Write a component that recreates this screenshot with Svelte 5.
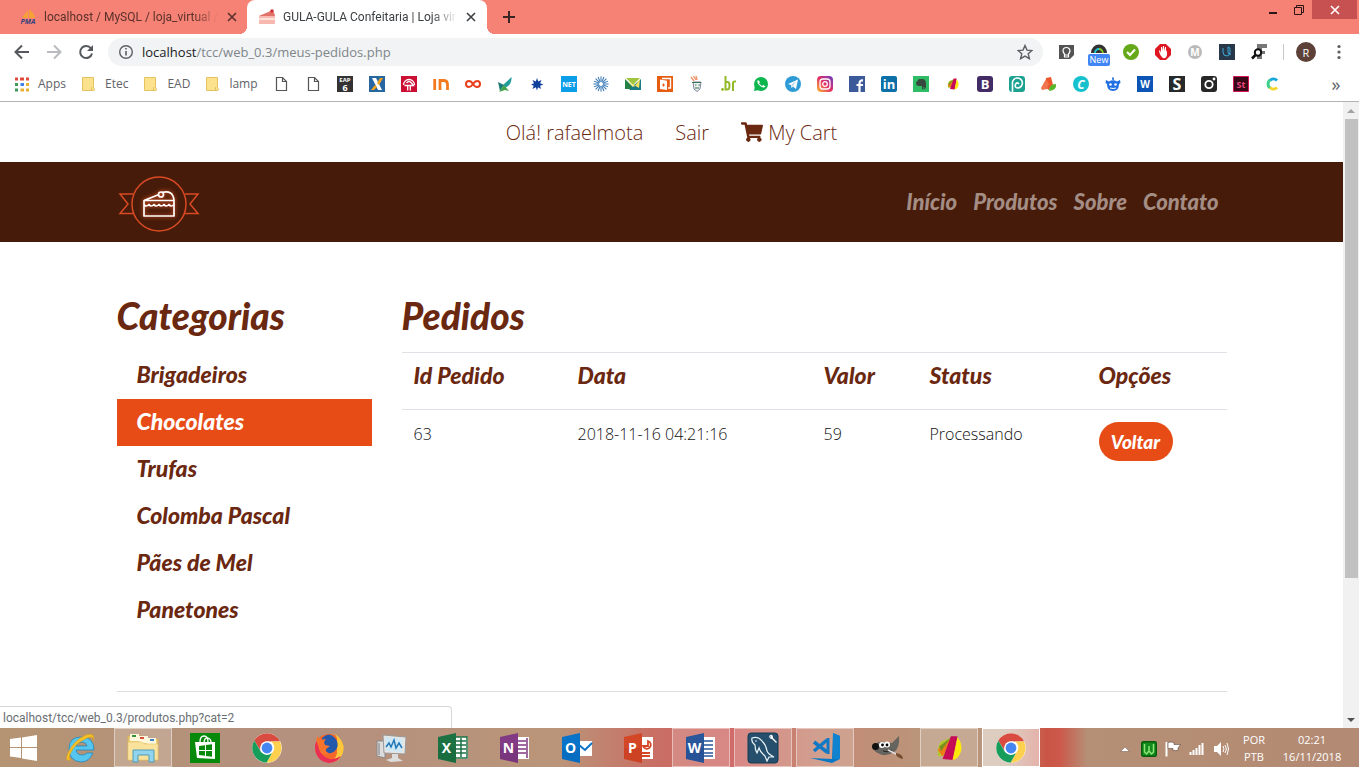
<script>
  const letter = (t, x, y, size, fill, extra = '') =>
    `<text x="${x}" y="${y}" font-size="${size}" fill="${fill}" font-family="Open Sans, sans-serif" font-weight="700" text-anchor="middle" ${extra}>${t}</text>`;
  const svg = (box, body) => `<svg viewBox="0 0 ${box} ${box}" width="100%" height="100%" overflow="visible" style="display:block" aria-hidden="true">${body}</svg>`;
  const folder = svg(16, '<path d="M1.500 1.500h11v10.500c1.500.5 1.500 2.500 0 2.500h-11z" fill="#fce28c" stroke="#e3c25f"/><path d="M10.500 11v3.500" stroke="#e3c25f"/>');
  const page = '<path d="M3.500 1.500h6l4 4v9h-10zM9.500 1.500v4h4" fill="#fff" stroke="#555" stroke-width="1.200"/>';
  const pinwheel = '<path d="M3 4L11 1 5 12.500 1.500 13Q0 9 3 4z" fill="#b3c92b"/><path d="M1 9L10 2 4 13z" fill="#ef7d1a"/><path d="M2 7L9 1.500 3 10z" fill="#7c8f1c"/><path d="M9 .8h4L10.500 15.200 4 14.500z" fill="#c60c56"/><path d="M13 1.500q3 3 2.300 8-1.500 5-5.300 5.700z" fill="#ffe90b"/>';

  const folders = [
    { name: 'Etec' },
    { name: 'EAD' },
    { name: 'lamp' }
  ];

  const rays = Array.from({ length: 16 }, (_, i) => `<path d="M8 6V.4" transform="rotate(${i * 22.5} 8 8)"/>`).join('');
  const marks = [
    ['Page', page],
    ['Page', page],
    ['EAP 6', `<path fill="#333" d="M0 0h16v16H0z"/>${letter('EAP', 8, 6, 6, '#fff')}${letter('6', 8, 14.5, 9, '#fff')}`],
    ['Exchange', '<path fill="#2666a1" d="M0 0h16v16H0z"/><path d="M3 2h4l6 12H9z" fill="#fff"/><path d="M14 2h-3L8 7l2 2zM6 9l-4 5h3l3-3z" fill="#f6a51b"/>'],
    ['Bradesco', '<path fill="#cb1034" d="M0 0h16v16H0z"/><path d="M2.500 9a5.500 5.500 0 0111 0M5.500 7q2.500-3 5 0l2 2.500H3.500M6.700 9v5.500M9.300 9v5.500" fill="none" stroke="#fff" stroke-width="1.300"/>'],
    ['Inter', '<path d="M1.700 3v11M7 14V4.500h3.500q4 0 4 4V14" fill="none" stroke="#f47a20" stroke-width="2.800"/>'],
    ['Coursera', '<path d="M8 8C6.500 5.500 5 5 4 5a3 3 0 000 6c2 0 3-1.500 4-3s2-3 4-3a3 3 0 010 6c-1 0-2.500-.5-4-3z" fill="none" stroke="#e8401c" stroke-width="2"/>'],
    ['Bird', '<path d="M14.500 1L6 9l2 3q7-3 6.500-11z" fill="#239e9c"/><path d="M1 6l6 3-4 6z" fill="#1a7d75"/><path d="M7 9l5 6-4-1-6 2z" fill="#44a44c"/>'],
    ['Star', '<path d="M8 2l1.200 3.500L12.500 4l-1.400 3.200L14.500 8.500l-3.400 1.200L12 13l-3-1.700L8 14.500l-1.200-3.200L3.500 13l1.200-3.300L2 8.500l3-1.300L3.500 4l3.300 1.500z" fill="#103f9c"/>'],
    ['NET', `<path fill="#0c9ee9" d="M0 0h16v16H0z"/>${letter('NET', 8, 10.500, 7, '#fff')}`],
    ['Burst', `<g stroke="#3376b5" stroke-width="1">${rays}</g>`],
    ['Mail', '<path d="M0 3l7 7v3H0z" fill="#258244"/><path d="M1 2h14l-7 7z" fill="#9fc53f"/><path d="M16 3v11H4l5-5z" fill="#187c88"/><path d="M4 6l5 5 6-8-1 9z" fill="#f7df58"/>'],
    ['Office', '<path fill="#e65d12" d="M0 0h16v16H0z"/><path d="M3 3.500l7 1.200V14l-7-1z" fill="#fff"/><path d="M5 2.500h8.500V12H11" fill="none" stroke="#fff" stroke-width="1.400"/><path d="M5 9h3M6.500 7.500v3" stroke="#e65d12"/>'],
    ['Pet', '<path d="M4 6l1 7 3 2.500 3-2.500 1-7z" fill="#edf3ec" stroke="#668" stroke-width=".8"/><path d="M2 1l3 4M4.500 0L7 4M7 0l1 4" stroke="#ef966b" stroke-width="1.400"/><path d="M3 6.500h9M6 9h1.500m2 0h1.500m-5 3h4" stroke="#35755c" stroke-width="1.200"/>'],
    ['br', '<path d="M4.500 0v13.500H6q2.500 0 2.500-4T6 6H4.500M12 15V7q0-2 3-1.500" fill="none" stroke="#92ba28" stroke-width="2"/><circle cx="1.500" cy="13.500" r="1.400" fill="#92ba28"/>'],
    ['WhatsApp', '<circle cx="8" cy="8" r="7" fill="#0eb74e"/><path d="M1 15l1-5 4 4z" fill="#0eb74e"/><path d="M5 4l2 2-1 1.500L9 10l1.500-1 2 1.500C10 14 2 7 5 4z" fill="#fff"/>'],
    ['Telegram', '<circle cx="8" cy="8" r="8" fill="#2f9bd6"/><path d="M3 8l10-4.500L11 13 8 10.500 6.500 12 6 9z" fill="#fff"/><path d="M6 9l5-4-3 5.500" fill="#b8d8eb"/>'],
    ['Instagram', '<defs><linearGradient id="ig" x2="1" y1="1" y2="0"><stop stop-color="#fdbf35"/><stop offset=".5" stop-color="#e52f66"/><stop offset="1" stop-color="#653cc8"/></linearGradient></defs><rect width="16" height="16" rx="4" fill="url(#ig)"/><rect x="3" y="3" width="10" height="10" rx="3" fill="none" stroke="#fff" stroke-width="1.300"/><circle cx="8" cy="8" r="2.300" fill="none" stroke="#fff" stroke-width="1.300"/>'],
    ['Facebook', '<path fill="#3c5a99" d="M0 0h16v16H0z"/><path d="M10.500 16V7.500q0-3.500 3.500-3.200M7.500 9H14" fill="none" stroke="#fff" stroke-width="2.200"/>'],
    ['LinkedIn', `<rect width="16" height="16" rx="2" fill="#0c70a8"/>${letter('in', 8, 13, 13, '#fff')}`],
    ['Evernote', '<path fill="#2ebd65" d="M0 0h16v16H0z"/><path d="M3 6.500L6 3h3.500q3.500 0 3.500 5v3q-.5 3.500-4 2v-3H6Q3 10 3 6.500z" fill="#37493e"/><path d="M10 12h1.500" stroke="#2ebd65"/>'],
    ['Pinwheel', `<g transform="translate(2 2) scale(.75)">${pinwheel}</g>`],
    ['Bootstrap', `<rect width="16" height="16" rx="3" fill="#432b66"/>${letter('B', 8, 13, 13, '#fff')}`],
    ['Photopea', '<rect width="16" height="16" rx="3" fill="#1da291"/><path d="M3.500 16V8a5 5 0 115 4q-3-.5-2-3.500T10 8" fill="none" stroke="#fff" stroke-width="1.600"/>'],
    ['Fruit', '<path d="M5 2l5-1 2 8-4 5-3-2z" fill="#ef552c"/><path d="M5 3L0 12l1 2 5-1 2-5z" fill="#f0754c"/><path d="M8 15q0-7 7-7 1 6-7 7z" fill="#56b72b"/>'],
    ['Canva', `<circle cx="8" cy="8" r="8" fill="#16c1ce"/>${letter('C', 8, 12.500, 12, '#fff', 'font-style="italic"')}`],
    ['Robot', '<path d="M2 8l-1.500-1L1 4l3 1.500Q8 3 12 5.500L15 4l.5 3L14 8q0 7-6 7T2 8zM7.300 4L7 1.500h2L8.700 4z" fill="#216fe2"/><circle cx="5.500" cy="8.500" r="1.300" fill="#fff"/><circle cx="10.500" cy="8.500" r="1.300" fill="#fff"/><path d="M5 12q3 1 6 0" stroke="#fff" fill="none"/>'],
    ['Word', `<path fill="#0c55b4" d="M0 0h16v16H0z"/>${letter('W', 8, 12, 10, '#fff')}`],
    ['S', `<path fill="#272a2b" d="M0 0h16v16H0z"/>${letter('S', 8, 14, 16, '#fff')}`],
    ['Camera', '<rect width="16" height="16" rx="3" fill="#272728"/><circle cx="8" cy="8.500" r="3.700" fill="none" stroke="#fff" stroke-width="1.800"/><circle cx="13" cy="3" r="1.400" fill="#fff"/>'],
    ['Stock', `<path fill="#390716" stroke="#d2185b" d="M.5.5h15v15H.5z"/>${letter('St', 8, 11.500, 9, '#e94881')}`],
    ['C', '<path d="M12 4.500A5 5 0 005 4.500" fill="none" stroke="#19a8da" stroke-width="3"/><path d="M5 4A5 5 0 005 12" fill="none" stroke="#3dd08d" stroke-width="3"/><path d="M5 11.500A5 5 0 0012 11.500" fill="none" stroke="#f2d52a" stroke-width="3"/>']
  ];

  const extensions = [
    ['Keep', svg(16, '<path d="M0 1h15v10l-4 4H0z" fill="#535353"/><path d="M5.500 10q-1-1-1.500-3a3.500 3.500 0 017 0q-.5 2-1.500 3v3h-4zM5.500 11h4" fill="none" stroke="#fff" stroke-width="1.200"/>')],
    ['Speed', svg(16, '<path d="M0 9a8 8.500 0 0116 0z" fill="#333"/><path d="M4 9a4 4 0 014-4" fill="none" stroke="#22c7dc" stroke-width="1.800"/><path d="M8 5q3 0 4 4" fill="none" stroke="#8dcb2a" stroke-width="1.800"/>')],
    ['Safe', svg(16, '<circle cx="8" cy="8" r="8" fill="#65a819"/><path d="M4 8l3 3 5-5.500" fill="none" stroke="#fff" stroke-width="2"/>')],
    ['Block', svg(16, '<path d="M5 0h6l5 5v6l-5 5H5l-5-5V5z" fill="#de1720"/><path d="M4 7l1-1 1 3V3h1v4l1-5h1v5l1-4h1v5l1-2v5q-1 4-4 3Q5 12 4 7z" fill="#fff"/>')],
    ['Mega', svg(16, `<circle cx="8" cy="8" r="7" fill="#bababa"/>${letter('M', 8, 11.500, 10, '#fff')}`)],
    ['Udacity', svg(16, '<path fill="#293849" d="M0 0h16v16H0z"/><path d="M4 4v4q0 4 4 4 3 0 3-4V5q0-2-2-2v5q0 3 3 2" fill="none" stroke="#3ba8d8" stroke-width="1"/>')],
    ['Fonts', svg(16, '<path d="M6 0h10v4h-5v3h3v3h-3v5H6z" fill="#777"/><circle cx="7" cy="8.500" r="3.200" fill="#fff" stroke="#111" stroke-width="2"/><path d="M4.500 11L1 14.500" stroke="#111" stroke-width="2.600"/>')]
  ];

  const office = (color, dark, ch, sheet) => svg(30, `${sheet}<path d="M0 4L18 0v30L0 26z" fill="${color}"/><path d="M0 15h18v15L0 26z" fill="${dark}" opacity=".15"/>${letter(ch, 8.500, 20, 14, '#fff')}`);
  const chrome = svg(30, '<circle cx="15" cy="15" r="14.700" fill="#fff"/><path d="M2.300 7.500A14.700 14.700 0 0127.700 7.500L28 8.500H15a7 7 0 00-6 10z" fill="#d94b40"/><path d="M28 8.500A14.700 14.700 0 0114.500 29.700L21 18.500a7 7 0 00-2-10z" fill="#fdd04e"/><path d="M2.300 7.500A14.700 14.700 0 0014.500 29.700L20 20q-6 4-11-1z" fill="#169d5a"/><circle cx="15" cy="15" r="6.800" fill="#fff"/><circle cx="15" cy="15" r="5.400" fill="#4586f3"/>');
  const lines = '<path d="M17 4h12v22H17z" fill="#fff"/>';
  const apps = [
    { name: 'Internet Explorer', art: svg(30, '<path d="M28 17H10q1 5 6 5 3 0 5-2h6q-4 9-12 9Q3 28 3 16T15 4q13 0 13 13zM10 13h11q-1-4-5-4-5 0-6 4z" fill="#57c6ee" stroke="#2588bc" stroke-width=".8"/><path d="M5 27q-7 2-3-7Q8 7 20 2q10-3 7 6 1-6-6-3Q9 10 4 21q-2 5 1 6z" fill="#f6c126" stroke="#dba21f" stroke-width=".7"/>') },
    { name: 'Explorador de Arquivos', state: 'open', art: svg(30, '<path d="M0 3h13l2 3h15v21H0z" fill="#edcf7c" stroke="#d4ad55"/><path d="M2 1h9v7H2zM11 3h9v7h-9zM19 5h9v7h-9z" fill="#fff7db"/><path d="M4 3h4" stroke="#37933b" stroke-width="2"/><path d="M22 7h4" stroke="#3b82c6" stroke-width="2"/><path d="M12 5h4" stroke="#dc4f37" stroke-width="2"/><path d="M0 9h14l2 2h14v16H0z" fill="#f9e29c" stroke="#e2c26d" stroke-width=".6"/><path d="M5 29V17h21v12h-5v-7H10v7z" fill="#90d4ed" stroke="#559bb6"/>') },
    { name: 'Loja', art: svg(30, '<path fill="#078a0b" d="M0 0h30v30H0z"/><path d="M5 9h20v17L7 25z" fill="#fff"/><path d="M10 9q0-6 4-6 4 0 4 6M14 9q1-5 4-4 3 1 3 4" fill="none" stroke="#fff" stroke-width="1.300"/><path d="M9 13l6-.8V17H9zM16 12l6-.8V17h-6zM9 18h6v4.800L9 22zM16 18h6v5.800l-6-.8z" fill="#078a0b"/>') },
    { name: 'Chrome', art: chrome },
    { name: 'Firefox', art: svg(30, '<circle cx="15" cy="15" r="14" fill="#f6682a"/><path d="M20 0q11 8 9.500 17-2 12-14.500 13 9-5 8-13 0-6-4-9 3 0 4 2Q24 4 20 0z" fill="#ffc73a"/><path d="M8 5q7-7 13 0 4 5 2 10-3 6-9 5-6-2-5-8z" fill="#2359ac"/><path d="M3 3l3 4 6-1q-3 3-1 6l5 1-4 3q-1 3 3 4-6 3-10-2Q1 11 3 3z" fill="#f9742b"/><path d="M1 13q0 15 14 17 8 0 12-7-8 5-14 2Q5 21 4 12q-1-1-1-4-2 2-2 5z" fill="#ea2f55"/>') },
    { name: 'Monitor', art: svg(30, '<path d="M1 8h8v17l-8-2z" fill="#ddd" stroke="#888"/><path d="M3 10v12" stroke="#777"/><path d="M7 2l23 2-1 17-21-1z" fill="#e7e5e1" stroke="#999"/><path d="M9 4l18 2-1 13-16-1z" fill="#cfe8f6"/><path d="M10 14l3-4 2 4 3-7 2 8 3-5 3 5" fill="none" stroke="#2477b5" stroke-width="1.500"/><path d="M16 21h6v4l5 3-12 1-5-2 6-2z" fill="#ddd"/>') },
    { name: 'Excel', art: office('#1d7244', '#045025', 'X', '<path d="M16 4h14v22H16z" fill="#fff"/><path d="M18 4h11v21H18M18 8h10M18 12h10M18 16h10M18 20h10M23 5v19" fill="none" stroke="#1d7244" stroke-width="1.500"/>') },
    { name: 'OneNote', art: office('#813a83', '#5a235c', 'N', lines + '<path d="M17 8h9M17 12h9M17 16h9M17 20h9M27 5v20" stroke="#813a83" stroke-width="1.500"/>') },
    { name: 'Outlook', art: office('#0873c8', '#024f9a', 'O', '<path d="M17 8h13v15H17z" fill="#fff"/><path d="M17 12l6 5 7-7" fill="none" stroke="#0873c8" stroke-width="2"/>') },
    { name: 'PowerPoint', art: office('#d44726', '#a72a12', 'P', lines + '<path d="M24 8a4 4 0 11-5 5h5zM18 20h8M18 23h8" fill="none" stroke="#d44726" stroke-width="1.800"/>') },
    { name: 'Word', state: 'open', art: office('#2a569a', '#183d79', 'W', lines + '<path d="M17 8h10M17 12h10M17 16h10M17 20h10M17 23h10" stroke="#2a569a" stroke-width="1.500"/>') },
    { name: 'MySQL Workbench', state: 'open', art: svg(30, '<rect width="30" height="30" rx="3" fill="#254f6d" stroke="#173a52"/><path d="M4 5q6-2 10 3 4 4 5 10 1 3 7 6l-5 0-2 4-2-5q-5-4-6-8l-2 5q-2-3-2-8Q3 9 4 5z" fill="none" stroke="#e9f2f6" stroke-width="1.200"/><circle cx="8" cy="8" r=".8" fill="#fff"/><path d="M21 2q0 4 3 4l4 4 1-1-4-4q0-4-3-3l1 3z" fill="#fff"/>') },
    { name: 'Visual Studio Code', state: 'open', art: svg(30, '<path d="M23 0l7 3v23l-8 4L0 25l22 1z" fill="#0878c6"/><path d="M23 0v26l7 0V3z" fill="#0f83d0"/><path d="M17 7L4 18M4 9l13 10" stroke="#1279c4" stroke-width="3.500" fill="none"/><path d="M18 5v16" stroke="#1279c4" stroke-width="3"/>') },
    { name: 'GIMP', art: svg(30, '<path d="M1 14q4-6 10-5l9 1 7-7q1 12-5 16-9 6-16 1Q2 19 1 14z" fill="#66645f"/><circle cx="3.500" cy="13.500" r="3.500" fill="#111"/><circle cx="10" cy="12" r="3" fill="#fff"/><circle cx="15" cy="11.500" r="3" fill="#fff"/><circle cx="10.500" cy="12" r="1.400"/><circle cx="15" cy="12" r="1.400"/><path d="M11 18q4 2 9-1" stroke="#222" fill="none"/><path d="M16 17l10 5" stroke="#ddd" stroke-width="1.500"/><path d="M24 20q7 1 7 6-5-1-7-4z" fill="#765131"/>') },
    { name: 'Pinwheel', state: 'open', art: svg(30, `<g transform="translate(2 2) scale(1.650)">${pinwheel}</g>`) },
    { name: 'Google Chrome', state: 'active', art: chrome }
  ];

  const tray = [
    ['Mostrar ícones ocultos', svg(16, '<path d="M3.500 10.500L8 6l4.500 4.500z" fill="#fff" stroke="#6d5546" stroke-width=".5"/>')],
    ['Servidor', svg(16, '<rect x=".7" y=".7" width="14.600" height="14.600" rx="1.500" fill="#138a1c" stroke="#085b0d" stroke-width="1.400"/><path d="M3.500 3v8l2 2L8 10l2.500 3 2-2V3M8 5v5" fill="none" stroke="#8de577" stroke-width="1.500"/>')],
    ['Central de Ações', svg(16, '<path d="M1.500 1v14.500" stroke="#fff" stroke-width="2"/><path d="M3 1.500q3-1 6 0v2h6.500L13 7v2.500H8v-2H3z" fill="#fff" stroke="#5f4c40" stroke-width=".6"/>')],
    ['Rede', svg(16, '<path d="M1.500 11v3M4.500 9v5M7.500 7v7M10.500 4v10M13.500 2v12" stroke="#fff" stroke-width="2"/>')],
    ['Volume', svg(16, '<path d="M1 5h3l4-4v14l-4-4H1z" fill="#fff"/><path d="M10 5q2 3 0 6M12 4q3 4 0 8M14 2q3 6 0 12" fill="none" stroke="#fff"/>')]
  ];

  const menu = ['Início', 'Produtos', 'Sobre', 'Contato'];
  const categories = ['Brigadeiros', 'Chocolates', 'Trufas', 'Colomba Pascal', 'Pães de Mel', 'Panetones'];
  const columns = ['Id Pedido', 'Data', 'Valor', 'Status', 'Opções'];
  const orders = [{ id: 63, date: '2018-11-16 04:21:16', value: 59, status: 'Processando' }];
  let address = $state('localhost/tcc/web_0.3/meus-pedidos.php');
</script>

{#snippet cross()}
  <svg viewBox="0 0 10 10" width="10" height="10" aria-hidden="true"><path d="M1 1l8 8M9 1L1 9" stroke="currentColor" stroke-width="1.6" /></svg>
{/snippet}

<div class="desktop">
  <div class="browser">
    <header class="tabs">
      <div class="tab">
        <span class="i16"><svg viewBox="0 0 16 16" width="16" height="16" overflow="visible" aria-hidden="true"><path d="M2 9Q5 4 8 2v7zM9 9V0q6 5 6 9z" fill="#f6a038" /><text x="8" y="15" font-size="7" font-weight="700" font-style="italic" text-anchor="middle" fill="#37417e" font-family="Open Sans, sans-serif">PMA</text></svg></span>
        <span class="title">localhost / MySQL / loja_virtual /</span>
        <button class="close" aria-label="Fechar guia">{@render cross()}</button>
      </div>
      <div class="tab current">
        <span class="i16"><svg viewBox="0 0 16 16" width="16" height="16" aria-hidden="true"><path d="M0 7l12-5q3 0 4 5v8H0z" fill="#f7b8b0" /><path d="M0 7l12-5q3 0 4 5z" fill="#e2736b" /><path d="M0 10h16" stroke="#fff0e8" stroke-width="1.5" /><circle cx="13" cy="2" r="1.8" fill="#cf3039" /></svg></span>
        <span class="title">GULA-GULA Confeitaria | Loja virt</span>
        <button class="close" aria-label="Fechar guia">{@render cross()}</button>
      </div>
      <button class="add" aria-label="Nova guia"><svg viewBox="0 0 12 12" width="12" height="12" aria-hidden="true"><path d="M6 0v12M0 6h12" stroke="#3a2522" stroke-width="2" /></svg></button>
      <div class="controls">
        <button aria-label="Minimizar"><svg viewBox="0 0 10 10" width="10" height="10" aria-hidden="true"><path d="M1 8h8" stroke="#2c1614" stroke-width="2" /></svg></button>
        <button aria-label="Restaurar"><svg viewBox="0 0 10 10" width="10" height="10" aria-hidden="true"><path d="M.5 2.500h7v7h-7zM2.500 2.500v-2h7v7h-2" fill="none" stroke="#2c1614" /></svg></button>
        <button class="quit" aria-label="Fechar">{@render cross()}</button>
      </div>
    </header>

    <div class="toolbar">
      <button class="tool" aria-label="Voltar à página anterior"><svg viewBox="0 0 16 16" width="16" height="16" aria-hidden="true"><path d="M15 8H2M8 1.500L1.500 8 8 14.500" fill="none" stroke="#55585c" stroke-width="2" /></svg></button>
      <button class="tool" aria-label="Avançar"><svg viewBox="0 0 16 16" width="16" height="16" aria-hidden="true"><path d="M1 8h13M8 1.500L14.500 8 8 14.500" fill="none" stroke="#b9bbbe" stroke-width="2" /></svg></button>
      <button class="tool" aria-label="Recarregar"><svg viewBox="0 0 16 16" width="16" height="16" aria-hidden="true"><path d="M13 4.500A6 6 0 1014 9.500" fill="none" stroke="#55585c" stroke-width="2" /><path d="M15 1v6H9z" fill="#55585c" /></svg></button>
      <div class="omnibox">
        <svg viewBox="0 0 16 16" width="16" height="16" aria-hidden="true"><circle cx="8" cy="8" r="6.300" fill="none" stroke="#5c6064" stroke-width="1.400" /><path d="M8 7v4.500M8 4v1.600" stroke="#5c6064" stroke-width="1.600" /></svg>
        <div class="address">
          <span aria-hidden="true"><b>localhost</b>{address.slice(9)}</span>
          <input aria-label="Endereço" bind:value={address} />
        </div>
        <button class="star" aria-label="Adicionar aos favoritos"><svg viewBox="0 0 16 16" width="16" height="16" aria-hidden="true"><path d="M8 1.500l2 4.600 5 .4-3.800 3.300 1.200 4.900L8 12.100l-4.400 2.600 1.200-4.900L1 6.500l5-.4z" fill="none" stroke="#5c6064" stroke-width="1.400" /></svg></button>
      </div>
      <div class="extensions">
        {#each extensions as [name, art]}
          <button class="i16" aria-label={name}>{@html art}{#if name === 'Speed'}<span class="new">New</span>{/if}</button>
        {/each}
      </div>
      <span class="divider"></span>
      <button class="avatar" aria-label="Perfil">R</button>
      <button class="dots" aria-label="Menu"><svg viewBox="0 0 4 16" width="4" height="16" aria-hidden="true"><g fill="#5a5d61"><circle cx="2" cy="2.500" r="1.600" /><circle cx="2" cy="8" r="1.600" /><circle cx="2" cy="13.500" r="1.600" /></g></svg></button>
    </div>

    <nav class="bookmarks" aria-label="Favoritos">
      <a class="named" href="#apps"><span class="i16"><svg viewBox="0 0 16 16" width="16" height="16" aria-hidden="true"><path d="M1 3h14" stroke="#df4a3c" stroke-width="3" /><path d="M1 8.500h4M1 14h4" stroke="#3f9b59" stroke-width="3" /><path d="M6.500 8.500h4" stroke="#3f82e9" stroke-width="3" /><path d="M6.500 14h4M12 8.500h3M12 14h3" stroke="#e8b134" stroke-width="3" /><path d="M5 0v16M11 0v16" stroke="#fff" stroke-width="2" /></svg></span>Apps</a>
      {#each folders as f}
        <a class="named" href="#folder"><span class="i16">{@html folder}</span>{f.name}</a>
      {/each}
      <div class="marks">
        {#each marks as [name, art]}
          <a class="i16" href="#bookmark" aria-label={name}>{@html svg(16, art)}</a>
        {/each}
      </div>
      <button class="more" aria-label="Mais favoritos">»</button>
    </nav>

    <div class="viewport">
      <div class="site">
        <div class="account">
          <a href="#conta">Olá! rafaelmota</a>
          <a href="#sair">Sair</a>
          <a href="#cart"><svg viewBox="0 0 576 512" width="22" height="20" aria-hidden="true"><path fill="#6b2810" d="M528 301l47-208c4-15-7-29-23-29H159l-9-45C148 8 138 0 126 0H24C11 0 0 11 0 24v16c0 13 11 24 24 24h70l70 343a56 56 0 1067 9h210a56 56 0 1064-10l5-26c4-15-8-29-23-29H218l-7-32h294c11 0 21-7 23-18z" /></svg> My Cart</a>
        </div>

        <div class="masthead">
          <div class="container bar">
            <a href="#home" aria-label="GULA-GULA Confeitaria">
              <svg class="logo" viewBox="0 0 84 60" width="84" height="60" aria-hidden="true">
                <g fill="none" stroke="#d84a24" stroke-width="1.500"><circle cx="42" cy="30" r="27" /><path d="M16 20H3l8 10-8 9.500h14M68 20h13l-8 10 8 9.500H67" /></g>
                <g class="cake" fill="none" stroke="#fff" stroke-width="1.700" stroke-linejoin="round"><path d="M27 26.500V42h30V26.500zM27 26.500l15-6M45 18.500q11-3 12 8M27 30.500q2 3 5 0 2 3 5 0 2 3 5 0 2 3 5 0 2 3 5 0 2 3 5 0" /><circle cx="44" cy="20.500" r="2.500" /></g>
              </svg>
            </a>
            <nav class="menu" aria-label="Principal">
              {#each menu as item}<a href="#menu">{item}</a>{/each}
            </nav>
          </div>
        </div>

        <main class="container columns">
          <aside>
            <h1>Categorias</h1>
            <ul>
              {#each categories as c}
                <li><a href="#categoria" class:hovered={c === 'Chocolates'}>{c}</a></li>
              {/each}
            </ul>
          </aside>
          <section>
            <h1>Pedidos</h1>
            <table>
              <thead><tr>{#each columns as c}<th scope="col">{c}</th>{/each}</tr></thead>
              <tbody>
                {#each orders as o}
                  <tr><td>{o.id}</td><td>{o.date}</td><td>{o.value}</td><td>{o.status}</td><td><button class="back">Voltar</button></td></tr>
                {/each}
              </tbody>
            </table>
          </section>
        </main>
        <div class="container"><hr /></div>
      </div>

      <div class="scrollbar">
        <button aria-label="Rolar para cima"><svg viewBox="0 0 8 4" width="8" height="4" aria-hidden="true"><path d="M0 4l4-4 4 4z" fill="#a3a3a3" /></svg></button>
        <div class="track"><div class="thumb"></div></div>
        <button aria-label="Rolar para baixo"><svg viewBox="0 0 8 4" width="8" height="4" aria-hidden="true"><path d="M0 0l4 4 4-4z" fill="#505050" /></svg></button>
      </div>
      <div class="status">localhost/tcc/web_0.3/produtos.php?cat=2</div>
    </div>
  </div>

  <footer class="taskbar">
    <button class="start" aria-label="Iniciar"><svg viewBox="0 0 28 26" width="28" height="26" aria-hidden="true"><path d="M0 4l11-1.500V12H0zM12 2.400L27 0v12H12zM0 13h11v10L0 21.500zM12 13h15v13l-15-2.400z" fill="#fff" /></svg></button>
    {#each apps as app}
      <button class="app {app.state ?? ''}" aria-label={app.name}><span>{@html app.art}</span></button>
    {/each}
    <div class="tray">
      {#each tray as [name, art]}
        <button class="i16" aria-label={name}>{@html art}</button>
      {/each}
    </div>
    <div class="lang"><span>POR</span><span>PTB</span></div>
    <div class="clock"><span>02:21</span><span>16/11/2018</span></div>
  </footer>
</div>

<style>
  :global(body) { margin: 0; }
  :global(*) { box-sizing: border-box; }
  button { border: 0; padding: 0; background: none; font: inherit; color: inherit; display: flex; align-items: center; justify-content: center; }
  a { color: inherit; text-decoration: none; }
  svg { display: block; }
  .i16 { width: 16px; height: 16px; flex: none; display: block; position: relative; }
  .desktop { min-height: 100vh; display: flex; flex-direction: column; font-family: "Open Sans", "Noto Sans", sans-serif; font-size: 12px; overflow: hidden; }
  .browser { flex: 1; display: flex; flex-direction: column; background: #fff; }

  .tabs { display: flex; height: 34px; background: #f58274; color: #5a302b; }
  .tab { display: flex; align-items: center; gap: 8px; width: 240px; padding: 0 10px 0 12px; }
  .tab:first-child { width: 247px; padding-left: 20px; padding-right: 9px; }
  .current { position: relative; background: #fff; color: #3c4043; border-radius: 8px 8px 0 0; }
  .current::before, .current::after { content: ""; position: absolute; bottom: 0; width: 8px; height: 8px; }
  .current::before { left: -8px; background: radial-gradient(circle at 0 0, transparent 8px, #fff 8px); }
  .current::after { right: -8px; background: radial-gradient(circle at 100% 0, transparent 8px, #fff 8px); }
  .title { flex: 1; min-width: 0; overflow: hidden; white-space: nowrap; font-family: Roboto, sans-serif; font-size: 12px; line-height: 16px; mask-image: linear-gradient(90deg, #000 86%, transparent); }
  .close { width: 12px; height: 16px; }
  .add { width: 44px; }
  .controls { margin-left: auto; display: flex; height: 19px; padding-right: 2px; }
  .controls button { width: 26px; }
  .controls .quit { width: 45px; background: #c75050; color: #fff; }

  .toolbar { display: flex; align-items: center; height: 36px; padding: 0 14px 0 6px; }
  .tool { width: 32px; height: 28px; }
  .omnibox { flex: 1; height: 28px; margin: 0 16px 0 6px; padding: 0 10px; display: flex; align-items: center; gap: 8px; border-radius: 14px; background: #f1f3f4; }
  .address { flex: 1; position: relative; font-size: 13px; line-height: 20px; color: #80868b; }
  .address b { font-weight: 400; color: #202124; }
  .address input { position: absolute; inset: 0; width: 100%; border: 0; padding: 0; background: none; font: inherit; color: transparent; caret-color: #202124; outline: none; }
  .extensions { display: flex; gap: 16px; }
  .new { position: absolute; left: -3px; top: 10px; width: 22px; height: 12px; border-radius: 2px; background: #4285f4; color: #fff; font-size: 9px; line-height: 12px; text-align: center; }
  .divider { width: 1px; height: 16px; margin: 0 12px 0 16px; background: #c6c8ca; }
  .avatar { width: 20px; height: 20px; border-radius: 50%; background: #5d4037; color: #fff; font-size: 11px; }
  .dots { width: 12px; margin-left: 17px; }

  .bookmarks { display: flex; align-items: center; height: 32px; padding: 0 14px 4px 14px; border-bottom: 1px solid #b4b4b4; color: #5f6368; }
  .named { display: flex; align-items: center; gap: 8px; margin-right: 15px; white-space: nowrap; }
  .marks { display: flex; gap: 16px; }
  .more { width: 18px; margin-left: auto; font-size: 18px; line-height: 16px; }

  .viewport { flex: 1; display: flex; position: relative; }
  .site { flex: 1; min-width: 0; color: #6b2810; }
  .container { max-width: 1110px; margin: 0 auto; }
  .account { display: flex; align-items: center; justify-content: center; gap: 32px; height: 60px; font-size: 20px; font-weight: 300; }
  .account a { display: flex; align-items: center; gap: 5px; }
  .masthead { background: #471b09; }
  .bar { display: flex; align-items: center; justify-content: space-between; height: 80px; padding-top: 4px; }
  .logo .cake { filter: drop-shadow(0 0 2px #f05a28); }
  .menu { display: flex; gap: 16px; padding: 0 8px 4px 0; font: italic 900 22px/24px Lato, sans-serif; color: #a38d84; }
  .columns { display: grid; grid-template-columns: 17fr 55fr; gap: 30px; padding-top: 52px; }
  h1 { margin: 0; height: 58px; font: italic 900 37px/44px Lato, sans-serif; }
  ul { list-style: none; margin: 0; padding: 0; font: italic 900 23px/24px Lato, sans-serif; }
  li a { display: block; padding: 10px 20px 13px; }
  .hovered { background: #e74c17; color: #fff; }
  table { width: 100%; border-collapse: collapse; table-layout: fixed; }
  th, td { padding: 12px; border-top: 1px solid #dee2e6; text-align: left; vertical-align: top; }
  th { height: 57px; padding-top: 10px; font: italic 900 23px/24px Lato, sans-serif; white-space: nowrap; }
  th:nth-child(1) { width: 164px; }
  th:nth-child(2) { width: 246px; }
  th:nth-child(3) { width: 106px; }
  th:nth-child(4) { width: 169px; }
  th:nth-child(5) { width: 140px; }
  td { color: #111; font-size: 16px; line-height: 24px; font-weight: 300; }
  .back { width: 74px; height: 39px; border-radius: 20px; background: #e74c17; color: #fff; font: italic 900 19px/24px Lato, sans-serif; }
  hr { border: 0; border-top: 1px solid #dfdfdf; margin: 57px 0 36px; }

  .scrollbar { width: 16px; display: flex; flex-direction: column; background: #f1f1f1; }
  .scrollbar button { height: 17px; }
  .track { flex: 1; padding: 0 1px 0 2px; }
  .thumb { height: 77.5%; background: #c1c1c1; }
  .status { position: absolute; left: 0; bottom: 0; width: 452px; height: 22px; padding-left: 3px; border: solid #d4d6d8; border-width: 1px 1px 0 0; border-top-right-radius: 4px; background: #fff; color: #6a6e73; font-family: Roboto, sans-serif; font-size: 12px; line-height: 22px; }

  .taskbar { display: flex; align-items: stretch; gap: 4px; height: 39px; background: linear-gradient(90deg, #b49473 0, #b4907f 23%, #ba9579 41%, #c96f64 48%, #cf6c69 54%, #c78975 60%, #b99579 68%, #b9967c 74%, #ca5546 77%, #cc594b 78%, #b58f76 80%, #b38a73 100%); color: #fff; }
  .start { width: 48px; }
  .app { width: 58px; border: 1px solid transparent; }
  .app span { width: 30px; height: 30px; display: block; }
  .open { background: #ffffff30; border-color: #ffffff70; }
  .active { background: #ffffff85; border-color: #fff; }
  .tray { display: flex; align-items: center; gap: 8px; margin-left: auto; padding-top: 2px; }
  .lang, .clock { display: flex; flex-direction: column; justify-content: center; text-align: center; font-size: 11px; line-height: 17px; }
  .lang { width: 42px; }
  .clock { width: 66px; margin-right: 14px; }
</style>
